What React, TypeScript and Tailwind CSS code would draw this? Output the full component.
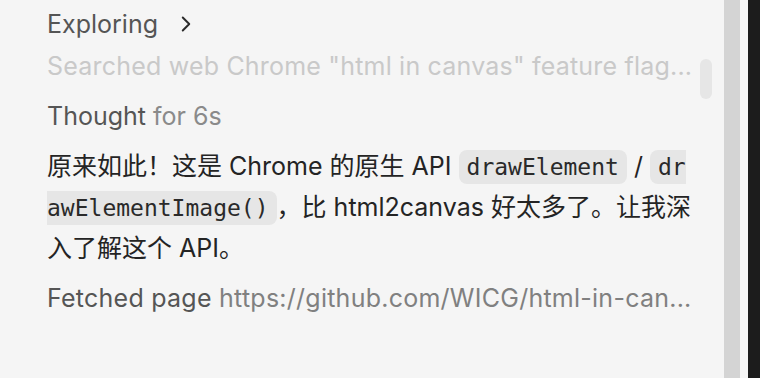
import { ChevronRight } from "lucide-react";

const sans = "font-['Inter','Noto_Sans_CJK_SC',sans-serif]";

function Code({ children, open = true, close = true }: { children: React.ReactNode; open?: boolean; close?: boolean }) {
  return (
    <code
      className={`font-['DejaVu_Sans_Mono',monospace] text-[23px] bg-[#e6e6e6] text-[#2a2a2a] py-[4px] ${open ? "pl-[8px] rounded-l-[8px]" : ""} ${close ? "pr-[8px] rounded-r-[8px]" : ""}`}
    >
      {children}
    </code>
  );
}

export default function App() {
  return (
    <div className={`w-[760px] h-[378px] flex bg-[#f5f5f5] overflow-hidden ${sans}`}>
      {/* Chat panel */}
      <div className="relative flex-1 min-w-0 pl-[47px] pr-[30px] pt-[4px] text-[25px]">
        <div className="flex items-center leading-[40px] text-[#555555]">
          <span>Exploring</span>
          <ChevronRight size={26} strokeWidth={1.8} className="ml-[15px] text-[#2a2a2a]" />
        </div>
        <div className="mt-[2px] leading-[40px] text-[#c9c9c9] whitespace-nowrap tracking-[0.2px]">
          Searched web Chrome "html in canvas" feature flag...
        </div>

        <div className="mt-[10px] leading-[40px]">
          <span className="text-[#555555]">Thought</span>{" "}
          <span className="text-[#8a8a8a]">for 6s</span>
        </div>

        <p className="mt-[10px] leading-[40px] text-[#242424] whitespace-nowrap">
          原来如此！这是 Chrome 的原生 API <Code>drawElement</Code> / <Code close={false}>dr</Code>
          <br />
          <Code open={false}>awElementImage()</Code>，比 html2canvas 好太多了。让我深
          <br />
          入了解这个 API。
        </p>

        <div className="mt-[10px] leading-[40px] whitespace-nowrap tracking-[0.25px]">
          <span className="text-[#555555]">Fetched page</span>{" "}
          <span className="text-[#808080]">https://github.com/WICG/html-in-can...</span>
        </div>

        {/* overlay scrollbar */}
        <div className="absolute right-[12px] top-[59px] w-[12px] h-[40px] rounded-full bg-[#e6e6e6]" />
      </div>

      {/* right edge */}
      <div className="w-[16px] bg-[#d4d4d4]" />
      <div className="w-[8px] bg-[#f5f5f5]" />
      <div className="w-[12px] bg-[#1c1c1c]" />
    </div>
  );
}
